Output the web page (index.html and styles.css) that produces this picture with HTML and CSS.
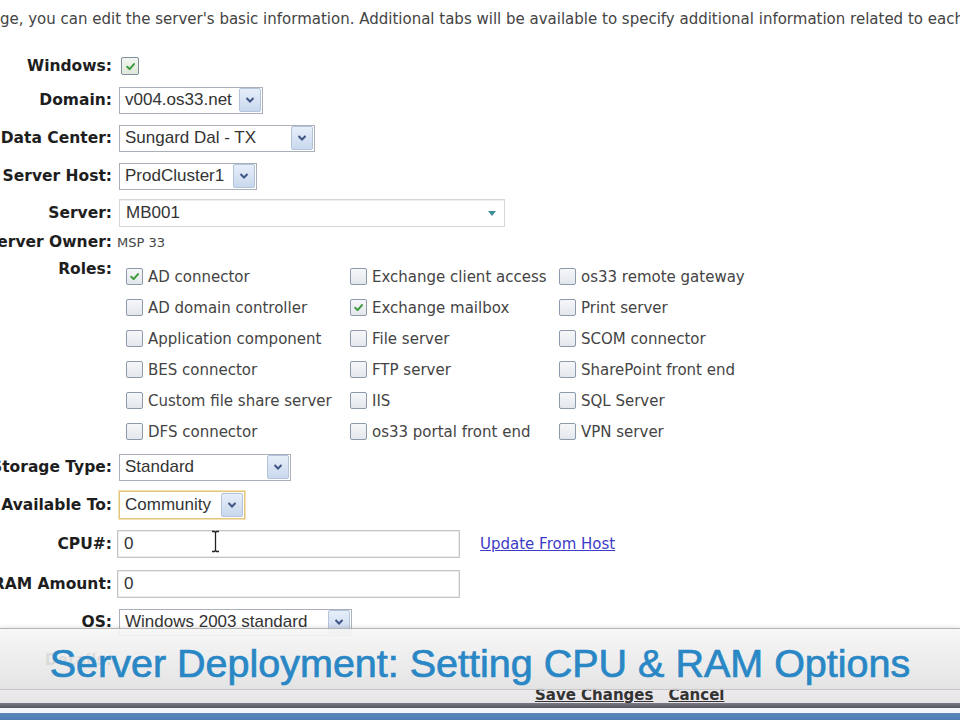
FILE: index.html
```html
<!DOCTYPE html>
<html lang="en">
<head>
  <meta charset="UTF-8" />
  <title>Edit Server</title>
  <link rel="stylesheet" href="styles.css">
</head>
<body>
  <div class="page">
    <p class="intro">On this page, you can edit the server's basic information. Additional tabs will be available to specify additional information related to each server role.</p>

    <div class="form">
      <div class="row r-windows">
        <label class="lbl">Windows:</label>
        <span class="cb cb-lg checked"><svg viewBox="0 0 10 10"><path d="M2 5.2l2.2 2.2L8.2 2.8"/></svg></span>
      </div>

      <div class="row r-domain">
        <label class="lbl">Domain:</label>
        <div class="select w-domain">
          <span class="sel-text">v004.os33.net</span>
          <span class="sel-btn"><svg viewBox="0 0 10 6"><path d="M1.5 1l3.5 3.5L8.5 1"/></svg></span>
        </div>
      </div>

      <div class="row r-dc">
        <label class="lbl">Data Center:</label>
        <div class="select w-dc">
          <span class="sel-text">Sungard Dal - TX</span>
          <span class="sel-btn"><svg viewBox="0 0 10 6"><path d="M1.5 1l3.5 3.5L8.5 1"/></svg></span>
        </div>
      </div>

      <div class="row r-host">
        <label class="lbl">Server Host:</label>
        <div class="select w-host">
          <span class="sel-text">ProdCluster1</span>
          <span class="sel-btn"><svg viewBox="0 0 10 6"><path d="M1.5 1l3.5 3.5L8.5 1"/></svg></span>
        </div>
      </div>

      <div class="row r-server">
        <label class="lbl">Server:</label>
        <div class="combo">
          <span class="sel-text">MB001</span>
          <span class="combo-arrow"></span>
        </div>
      </div>

      <div class="row r-owner">
        <label class="lbl">Server Owner:</label>
        <span class="plain">MSP 33</span>
      </div>

      <div class="row r-roles">
        <label class="lbl">Roles:</label>
        <div class="roles">
          <div class="role"><span class="cb checked"><svg viewBox="0 0 10 10"><path d="M2 5.2l2.2 2.2L8.2 2.8"/></svg></span>AD connector</div>
          <div class="role"><span class="cb"></span>Exchange client access</div>
          <div class="role"><span class="cb"></span>os33 remote gateway</div>

          <div class="role"><span class="cb"></span>AD domain controller</div>
          <div class="role"><span class="cb checked"><svg viewBox="0 0 10 10"><path d="M2 5.2l2.2 2.2L8.2 2.8"/></svg></span>Exchange mailbox</div>
          <div class="role"><span class="cb"></span>Print server</div>

          <div class="role"><span class="cb"></span>Application component</div>
          <div class="role"><span class="cb"></span>File server</div>
          <div class="role"><span class="cb"></span>SCOM connector</div>

          <div class="role"><span class="cb"></span>BES connector</div>
          <div class="role"><span class="cb"></span>FTP server</div>
          <div class="role"><span class="cb"></span>SharePoint front end</div>

          <div class="role"><span class="cb"></span>Custom file share server</div>
          <div class="role"><span class="cb"></span>IIS</div>
          <div class="role"><span class="cb"></span>SQL Server</div>

          <div class="role"><span class="cb"></span>DFS connector</div>
          <div class="role"><span class="cb"></span>os33 portal front end</div>
          <div class="role"><span class="cb"></span>VPN server</div>
        </div>
      </div>

      <div class="row r-storage">
        <label class="lbl">Storage Type:</label>
        <div class="select w-storage">
          <span class="sel-text">Standard</span>
          <span class="sel-btn"><svg viewBox="0 0 10 6"><path d="M1.5 1l3.5 3.5L8.5 1"/></svg></span>
        </div>
      </div>

      <div class="row r-avail">
        <label class="lbl">Available To:</label>
        <div class="select w-avail focused">
          <span class="sel-text">Community</span>
          <span class="sel-btn"><svg viewBox="0 0 10 6"><path d="M1.5 1l3.5 3.5L8.5 1"/></svg></span>
        </div>
      </div>

      <div class="row r-cpu">
        <label class="lbl">CPU#:</label>
        <div class="input"><span class="sel-text">0</span></div>
        <a href="#" class="host-link">Update From Host</a>
      </div>

      <div class="row r-ram">
        <label class="lbl">RAM Amount:</label>
        <div class="input"><span class="sel-text">0</span></div>
      </div>

      <div class="row r-os">
        <label class="lbl">OS:</label>
        <div class="select w-os">
          <span class="sel-text">Windows 2003 standard</span>
          <span class="sel-btn"><svg viewBox="0 0 10 6"><path d="M1.5 1l3.5 3.5L8.5 1"/></svg></span>
        </div>
      </div>

      <div class="row r-notes">
        <label class="lbl">Details:</label>
      </div>
    </div>

    <div class="actions">
      <a href="#">Save Changes</a>
      <a href="#">Cancel</a>
    </div>
    <div class="footer-rule"></div>
    <div class="footer-gap"></div>
    <div class="footer-bar"></div>
  </div>

  <!-- mouse text cursor over the CPU field -->
  <svg class="ibeam" viewBox="0 0 9 23">
    <path d="M1 1.5h2.5l1 1 1-1H8M4.5 2.5v18M1 21.5h2.5l1-1 1 1H8"/>
  </svg>

  <div class="caption">Server Deployment: Setting CPU &amp; RAM Options</div>
</body>
</html>
```

FILE: styles.css
```css
html, body {
  margin: 0;
  padding: 0;
}

body {
  position: relative;
  height: 720px;
  overflow: hidden;
  background: #fff;
  font-family: "DejaVu Sans", Verdana, sans-serif;
  color: #1e1e1e;
}

.page {
  margin-left: -28px;
}

.intro {
  margin: 0 0 0 -49px;
  height: 38px;
  line-height: 38px;
  font-size: 15px;
  color: #444;
  white-space: nowrap;
}

.form {
  margin-top: 14px;
}

.row {
  display: flex;
  align-items: center;
}

.lbl {
  flex: none;
  width: 140px;
  margin-right: 7px;
  text-align: right;
  font-weight: bold;
  font-size: 15.5px;
  color: #1e1e1e;
  white-space: nowrap;
}

/* row heights */
.r-windows { height: 28px; }
.r-domain  { height: 40px; }
.r-dc      { height: 36px; }
.r-host    { height: 40px; }
.r-server  { height: 34px; }
.r-owner   { height: 24px; }
.r-storage { height: 38px; }
.r-avail   { height: 38px; }
.r-cpu     { height: 40px; }
.r-ram     { height: 40px; }
.r-os      { height: 36px; }
.r-notes   { height: 40px; }

.r-roles {
  align-items: flex-start;
  padding: 7px 0 1px;
}

.r-roles .lbl {
  line-height: 18px;
  margin-top: -1px;
}

/* checkboxes */
.cb {
  flex: none;
  display: inline-flex;
  align-items: center;
  justify-content: center;
  width: 15px;
  height: 15px;
  border: 1px solid #8d9aab;
  border-radius: 2px;
  background: linear-gradient(#f6f7f9, #e3e7ec);
  box-sizing: content-box;
}

.cb-lg {
  width: 16px;
  height: 16px;
  margin-left: 2px;
  border-color: #7f8e9f;
  background: linear-gradient(#f2f6ef, #dfe8da);
}

.cb svg {
  width: 11px;
  height: 11px;
}

.cb path {
  fill: none;
  stroke: #3c9a3c;
  stroke-width: 1.8;
  stroke-linecap: round;
  stroke-linejoin: round;
}

/* dropdowns */
.select {
  display: flex;
  align-items: center;
  justify-content: space-between;
  height: 27px;
  box-sizing: border-box;
  padding: 0 1px 0 5px;
  border: 1px solid #a9b0b8;
  background: #fff;
}

.select.focused {
  border-color: #e3c47c;
  box-shadow: 0 0 0 1px #f3e2b6;
}

.sel-text {
  font-family: "Liberation Sans", Arial, sans-serif;
  font-size: 17px;
  color: #333;
  white-space: nowrap;
}

.sel-btn {
  display: flex;
  align-items: center;
  justify-content: center;
  width: 20px;
  height: 22px;
  border: 1px solid #b3c3da;
  border-radius: 2px;
  background: linear-gradient(#e6eef9, #c9d8ee);
}

.sel-btn svg {
  width: 10px;
  height: 6px;
}

.sel-btn path {
  fill: none;
  stroke: #3f5584;
  stroke-width: 2;
}

.w-domain  { width: 144px; }
.w-dc      { width: 196px; }
.w-host    { width: 138px; }
.w-storage { width: 172px; }
.w-avail   { width: 126px; height: 28px; }
.w-os      { width: 233px; }

/* server combo */
.combo {
  display: flex;
  align-items: center;
  justify-content: space-between;
  width: 386px;
  height: 28px;
  box-sizing: border-box;
  padding: 0 8px 0 6px;
  border: 1px solid #d6d6d6;
  box-shadow: inset 0 1px 1px #eee;
}

.combo-arrow {
  width: 0;
  height: 0;
  border-left: 4px solid transparent;
  border-right: 4px solid transparent;
  border-top: 5px solid #3d8d9c;
}

.plain {
  margin-left: -2px;
  font-size: 13px;
  color: #444;
}

/* roles grid */
.roles {
  display: grid;
  grid-template-columns: 224px 209px 200px;
  grid-auto-rows: 31px;
  padding-left: 7px;
}

.role {
  display: flex;
  align-items: center;
  gap: 5px;
  font-size: 15px;
  color: #444;
  white-space: nowrap;
}

/* text inputs */
.input {
  display: flex;
  align-items: center;
  width: 343px;
  height: 28px;
  margin-left: -2px;
  box-sizing: border-box;
  padding-left: 6px;
  border: 1px solid #c4c4c4;
  box-shadow: inset 0 0 0 1px #ececec;
}

.host-link {
  margin-left: 20px;
  font-size: 15px;
  color: #3c3cc6;
}

/* bottom */
.actions {
  height: 23px;
  box-sizing: border-box;
  padding: 8px 0 0 563px;
  background: linear-gradient(#f1eff1, #e8e4e8);
  display: flex;
  gap: 15px;
}

.actions a {
  font-size: 15px;
  line-height: 15px;
  font-weight: bold;
  color: #333;
}

.footer-rule {
  height: 5px;
  background: linear-gradient(#7a7a86, #55555f);
}

.footer-gap {
  height: 5px;
  background: #f4f6f9;
}

.footer-bar {
  height: 20px;
  background: linear-gradient(#5a86bb, #3e6ea8);
}

.ibeam {
  position: absolute;
  left: 211px;
  top: 530px;
  width: 9px;
  height: 23px;
}

.ibeam path {
  fill: none;
  stroke: #222;
  stroke-width: 1.3;
}

/* title strip laid over the form */
.caption {
  position: absolute;
  left: 0;
  right: 0;
  top: 628px;
  height: 62px;
  box-sizing: border-box;
  padding-top: 9px;
  display: flex;
  align-items: center;
  justify-content: center;
  background: linear-gradient(rgba(246, 246, 246, 0.9), rgba(226, 226, 226, 0.93));
  border-top: 1px solid rgba(140, 140, 140, 0.55);
  border-bottom: 1px solid rgba(170, 170, 170, 0.6);
  box-shadow: 0 -2px 3px rgba(0, 0, 0, 0.08);
  font-family: "Liberation Sans", Arial, sans-serif;
  font-size: 39.5px;
  color: #2987c5;
  -webkit-text-stroke: 0.7px #2987c5;
  white-space: nowrap;
}
```
